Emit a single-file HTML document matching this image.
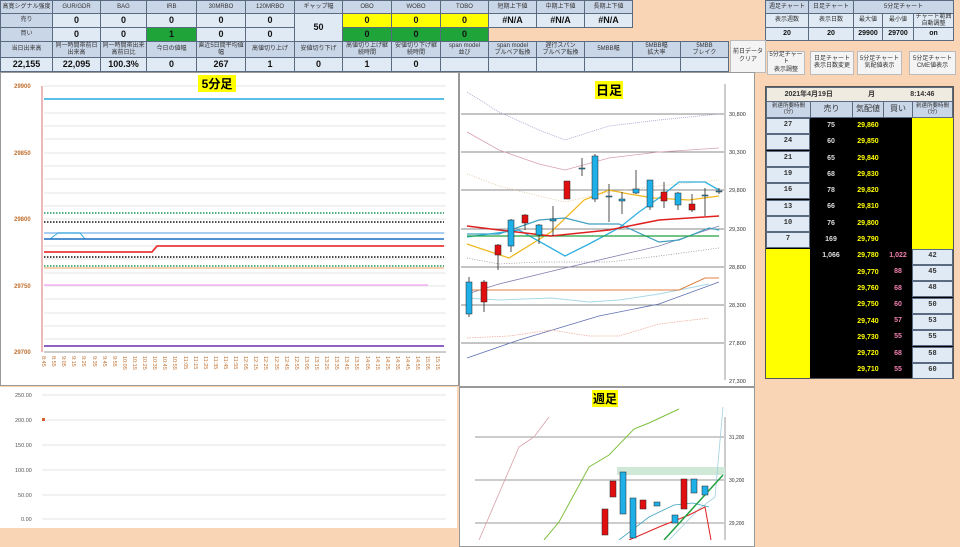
<!DOCTYPE html>
<html><head><meta charset="utf-8"><style>
*{margin:0;padding:0;box-sizing:border-box}
body{width:960px;height:540px;background:#fad5b5;position:relative;overflow:hidden;font-family:"Liberation Sans","Noto Sans CJK JP",sans-serif}
.c{position:absolute;border:1px solid #5a6a80;background:#dfeaf4;font-size:6px;color:#333;text-align:center;display:flex;align-items:center;justify-content:center;line-height:1.05}
.h{background:#c9d6e8}
.v{font-size:9px;font-weight:bold;color:#111}
.y{background:#ffff00}.g{background:#1fa43a}
.btn{position:absolute;background:#f4f4f4;border:1px solid #bbb;font-size:6px;text-align:center;display:flex;align-items:center;justify-content:center;line-height:1.2;color:#333}
.p{position:absolute;background:#fff;border:1px solid #999}
.t{position:absolute;font-size:8px;font-weight:bold;text-align:center}
</style></head><body>
<!-- top table -->
<div class="c h" style="left:0;top:0;width:53px;height:14px">高寛シグナル強度</div>
<div class="c h" style="left:52;left:52px;top:0;width:49px;height:14px">GUR/GDR</div>
<div class="c h" style="left:100px;top:0;width:47px;height:14px">BAG</div>
<div class="c h" style="left:146px;top:0;width:51px;height:14px">IRB</div>
<div class="c h" style="left:196px;top:0;width:50px;height:14px">30MRBO</div>
<div class="c h" style="left:245px;top:0;width:50px;height:14px">120MRBO</div>
<div class="c h" style="left:294px;top:0;width:49px;height:14px">ギャップ幅</div>
<div class="c h" style="left:342px;top:0;width:50px;height:14px">OBO</div>
<div class="c h" style="left:391px;top:0;width:50px;height:14px">WOBO</div>
<div class="c h" style="left:440px;top:0;width:49px;height:14px">TOBO</div>
<div class="c h" style="left:488px;top:0;width:49px;height:14px">短期上下値</div>
<div class="c h" style="left:536px;top:0;width:49px;height:14px">中期上下値</div>
<div class="c h" style="left:584px;top:0;width:49px;height:14px">長期上下値</div>

<div class="c h" style="left:0;top:13px;width:53px;height:15px">売り</div>
<div class="c v" style="left:52px;top:13px;width:49px;height:15px">0</div>
<div class="c v" style="left:100px;top:13px;width:47px;height:15px">0</div>
<div class="c v" style="left:146px;top:13px;width:51px;height:15px">0</div>
<div class="c v" style="left:196px;top:13px;width:50px;height:15px">0</div>
<div class="c v" style="left:245px;top:13px;width:50px;height:15px">0</div>
<div class="c v" style="left:294px;top:13px;width:49px;height:29px">50</div>
<div class="c v y" style="left:342px;top:13px;width:50px;height:15px">0</div>
<div class="c v y" style="left:391px;top:13px;width:50px;height:15px">0</div>
<div class="c v y" style="left:440px;top:13px;width:49px;height:15px">0</div>
<div class="c v" style="left:488px;top:13px;width:49px;height:15px">#N/A</div>
<div class="c v" style="left:536px;top:13px;width:49px;height:15px">#N/A</div>
<div class="c v" style="left:584px;top:13px;width:49px;height:15px">#N/A</div>

<div class="c h" style="left:0;top:27px;width:53px;height:15px">買い</div>
<div class="c v" style="left:52px;top:27px;width:49px;height:15px">0</div>
<div class="c v" style="left:100px;top:27px;width:47px;height:15px">0</div>
<div class="c v g" style="left:146px;top:27px;width:51px;height:15px">1</div>
<div class="c v" style="left:196px;top:27px;width:50px;height:15px">0</div>
<div class="c v" style="left:245px;top:27px;width:50px;height:15px">0</div>
<div class="c v g" style="left:342px;top:27px;width:50px;height:15px">0</div>
<div class="c v g" style="left:391px;top:27px;width:50px;height:15px">0</div>
<div class="c v g" style="left:440px;top:27px;width:49px;height:15px">0</div>

<div class="c h" style="left:0;top:41px;width:53px;height:17px">当日出来高</div>
<div class="c h" style="left:52px;top:41px;width:49px;height:17px">同一時間帯前日<br>出来高</div>
<div class="c h" style="left:100px;top:41px;width:47px;height:17px">同一時間帯出来<br>高前日比</div>
<div class="c h" style="left:146px;top:41px;width:51px;height:17px">今日の値幅</div>
<div class="c h" style="left:196px;top:41px;width:50px;height:17px">直近5日間平均値<br>幅</div>
<div class="c h" style="left:245px;top:41px;width:50px;height:17px">高値切り上げ</div>
<div class="c h" style="left:294px;top:41px;width:49px;height:17px">安値切り下げ</div>
<div class="c h" style="left:342px;top:41px;width:50px;height:17px">高値切り上げ継<br>続時間</div>
<div class="c h" style="left:391px;top:41px;width:50px;height:17px">安値切り下げ継<br>続時間</div>
<div class="c h" style="left:440px;top:41px;width:49px;height:17px">span model<br>並び</div>
<div class="c h" style="left:488px;top:41px;width:49px;height:17px">span model<br>ブルベア転換</div>
<div class="c h" style="left:536px;top:41px;width:49px;height:17px">遅行スパン<br>ブルベア転換</div>
<div class="c h" style="left:584px;top:41px;width:49px;height:17px">5MBB幅</div>
<div class="c h" style="left:632px;top:41px;width:49px;height:17px">5MBB幅<br>拡大率</div>
<div class="c h" style="left:680px;top:41px;width:49px;height:17px">5MBB<br>ブレイク</div>

<div class="c v" style="left:0;top:57px;width:53px;height:15px">22,155</div>
<div class="c v" style="left:52px;top:57px;width:49px;height:15px">22,095</div>
<div class="c v" style="left:100px;top:57px;width:47px;height:15px">100.3%</div>
<div class="c v" style="left:146px;top:57px;width:51px;height:15px">0</div>
<div class="c v" style="left:196px;top:57px;width:50px;height:15px">267</div>
<div class="c v" style="left:245px;top:57px;width:50px;height:15px">1</div>
<div class="c v" style="left:294px;top:57px;width:49px;height:15px">0</div>
<div class="c v" style="left:342px;top:57px;width:50px;height:15px">1</div>
<div class="c v" style="left:391px;top:57px;width:50px;height:15px">0</div>
<div class="c v" style="left:440px;top:57px;width:49px;height:15px"></div>
<div class="c v" style="left:488px;top:57px;width:49px;height:15px"></div>
<div class="c v" style="left:536px;top:57px;width:49px;height:15px"></div>
<div class="c v" style="left:584px;top:57px;width:49px;height:15px"></div>
<div class="c v" style="left:632px;top:57px;width:49px;height:15px"></div>
<div class="c v" style="left:680px;top:57px;width:49px;height:15px"></div>

<!-- right top table -->
<div class="c h" style="left:765px;top:0;width:44px;height:14px">週足チャート</div>
<div class="c h" style="left:808px;top:0;width:46px;height:14px">日足チャート</div>
<div class="c h" style="left:853px;top:0;width:101px;height:14px">5分足チャート</div>
<div class="c" style="left:765px;top:13px;width:44px;height:15px">表示週数</div>
<div class="c" style="left:808px;top:13px;width:46px;height:15px">表示日数</div>
<div class="c" style="left:853px;top:13px;width:30px;height:15px">最大値</div>
<div class="c" style="left:882px;top:13px;width:32px;height:15px">最小値</div>
<div class="c" style="left:913px;top:13px;width:41px;height:15px">チャート範囲<br>自動調整</div>
<div class="c v" style="left:765px;top:27px;width:44px;height:14px;font-size:7px">20</div>
<div class="c v" style="left:808px;top:27px;width:46px;height:14px;font-size:7px">20</div>
<div class="c v" style="left:853px;top:27px;width:30px;height:14px;font-size:7px">29900</div>
<div class="c v" style="left:882px;top:27px;width:32px;height:14px;font-size:7px">29700</div>
<div class="c v" style="left:913px;top:27px;width:41px;height:14px;font-size:7px">on</div>

<div class="btn" style="left:730px;top:40px;width:36px;height:33px">前日データ<br>クリア</div>
<div class="btn" style="left:767px;top:51px;width:38px;height:24px">5分足チャート<br>表示調整</div>
<div class="btn" style="left:810px;top:51px;width:44px;height:24px">日足チャート<br>表示日数変更</div>
<div class="btn" style="left:857px;top:51px;width:45px;height:24px">5分足チャート<br>気配値表示</div>
<div class="btn" style="left:909px;top:51px;width:47px;height:24px">5分足チャート<br>CME値表示</div>

<!-- 5min chart -->
<div class="p" style="left:0;top:72px;width:459px;height:314px"></div>
<svg style="position:absolute;left:0;top:72px" width="459" height="314">
<g stroke="#ddd" stroke-width="0.7">
<line x1="44" x2="446" y1="14" y2="14"/><line x1="44" x2="446" y1="41" y2="41"/><line x1="44" x2="446" y1="54" y2="54"/><line x1="44" x2="446" y1="67" y2="67"/><line x1="44" x2="446" y1="81" y2="81"/><line x1="44" x2="446" y1="94" y2="94"/><line x1="44" x2="446" y1="107" y2="107"/><line x1="44" x2="446" y1="121" y2="121"/><line x1="44" x2="446" y1="134" y2="134"/><line x1="44" x2="446" y1="147" y2="147"/><line x1="44" x2="446" y1="161" y2="161"/><line x1="44" x2="446" y1="174" y2="174"/><line x1="44" x2="446" y1="187" y2="187"/><line x1="44" x2="446" y1="201" y2="201"/><line x1="44" x2="446" y1="214" y2="214"/><line x1="44" x2="446" y1="227" y2="227"/><line x1="44" x2="446" y1="241" y2="241"/><line x1="44" x2="446" y1="254" y2="254"/><line x1="44" x2="446" y1="267" y2="267"/></g>
<line x1="42" y1="14" x2="42" y2="208" stroke="#e6a0a0" stroke-width="1.5"/>
<line x1="42" y1="208" x2="42" y2="280" stroke="#e6a0a0" stroke-width="1.5"/>
<line x1="44" y1="280" x2="446" y2="280" stroke="#999"/>
<line x1="44" y1="27" x2="444" y2="27" stroke="#5bc0e8" stroke-width="2"/>
<line x1="44" y1="141" x2="444" y2="141" stroke="#1a9a5a" stroke-width="1.5" stroke-dasharray="1.5 1.5"/>
<line x1="44" y1="150" x2="444" y2="150" stroke="#111" stroke-width="1.5" stroke-dasharray="1.5 1.5"/>
<line x1="44" y1="161" x2="444" y2="161" stroke="#9cc8f0" stroke-width="1.8"/>
<polyline points="50,167 58,161 80,161 85,167" fill="none" stroke="#3aaee0" stroke-width="1"/>
<line x1="44" y1="167" x2="444" y2="167" stroke="#1a6ec0" stroke-width="1.5"/>
<polyline points="44,180 152,180 157,174 444,174" fill="none" stroke="#e83a3a" stroke-width="1.8"/>
<line x1="44" y1="185" x2="444" y2="185" stroke="#111" stroke-width="1.5" stroke-dasharray="1.5 1.5"/>
<line x1="44" y1="194" x2="444" y2="194" stroke="#1a9a5a" stroke-width="1.5" stroke-dasharray="1.5 1.5"/>
<line x1="44" y1="196" x2="444" y2="196" stroke="#f0a060" stroke-width="1"/>
<line x1="44" y1="213" x2="428" y2="213" stroke="#f5b0f0" stroke-width="1.5"/>
<line x1="44" y1="274" x2="444" y2="274" stroke="#9060c0" stroke-width="2"/>
<g font-size="6" fill="#c07030" font-weight="bold" font-family="Liberation Sans">
<text x="14" y="16">29900</text><text x="14" y="83">29850</text><text x="14" y="149">29800</text><text x="14" y="216">29750</text><text x="14" y="282">29700</text></g>
<g font-size="5.5" fill="#c07030" font-family="Liberation Sans">
<text transform="translate(42,284) rotate(90)">8:45</text><text transform="translate(52,284) rotate(90)">8:55</text><text transform="translate(62,284) rotate(90)">9:05</text><text transform="translate(72,284) rotate(90)">9:15</text><text transform="translate(82,284) rotate(90)">9:25</text><text transform="translate(93,284) rotate(90)">9:35</text><text transform="translate(103,284) rotate(90)">9:45</text><text transform="translate(113,284) rotate(90)">9:55</text><text transform="translate(123,284) rotate(90)">10:05</text><text transform="translate(133,284) rotate(90)">10:15</text><text transform="translate(143,284) rotate(90)">10:25</text><text transform="translate(153,284) rotate(90)">10:35</text><text transform="translate(163,284) rotate(90)">10:45</text><text transform="translate(173,284) rotate(90)">10:55</text><text transform="translate(184,284) rotate(90)">11:05</text><text transform="translate(194,284) rotate(90)">11:15</text><text transform="translate(204,284) rotate(90)">11:25</text><text transform="translate(214,284) rotate(90)">11:35</text><text transform="translate(224,284) rotate(90)">11:45</text><text transform="translate(234,284) rotate(90)">11:55</text><text transform="translate(244,284) rotate(90)">12:05</text><text transform="translate(254,284) rotate(90)">12:15</text><text transform="translate(264,284) rotate(90)">12:25</text><text transform="translate(275,284) rotate(90)">12:35</text><text transform="translate(285,284) rotate(90)">12:45</text><text transform="translate(295,284) rotate(90)">12:55</text><text transform="translate(305,284) rotate(90)">13:05</text><text transform="translate(315,284) rotate(90)">13:15</text><text transform="translate(325,284) rotate(90)">13:25</text><text transform="translate(335,284) rotate(90)">13:35</text><text transform="translate(345,284) rotate(90)">13:45</text><text transform="translate(355,284) rotate(90)">13:55</text><text transform="translate(366,284) rotate(90)">14:05</text><text transform="translate(376,284) rotate(90)">14:15</text><text transform="translate(386,284) rotate(90)">14:25</text><text transform="translate(396,284) rotate(90)">14:35</text><text transform="translate(406,284) rotate(90)">14:45</text><text transform="translate(416,284) rotate(90)">14:55</text><text transform="translate(426,284) rotate(90)">15:05</text><text transform="translate(436,284) rotate(90)">15:15</text></g>
<rect x="198" y="3" width="38" height="17" fill="#ffff00"/>
<text x="217" y="16" font-size="12" font-weight="bold" text-anchor="middle" font-family="Liberation Sans,Noto Sans CJK JP,sans-serif">5分足</text>
</svg>

<!-- daily chart -->
<div class="p" style="left:459px;top:72px;width:296px;height:315px"></div>
<svg style="position:absolute;left:459px;top:72px" width="296" height="315">
<g stroke="#888" stroke-width="1"><line x1="2" x2="265" y1="42" y2="42"/><line x1="2" x2="265" y1="80" y2="80"/><line x1="2" x2="265" y1="118" y2="118"/><line x1="2" x2="265" y1="157" y2="157"/><line x1="2" x2="265" y1="195" y2="195"/><line x1="2" x2="265" y1="233" y2="233"/><line x1="2" x2="265" y1="271" y2="271"/></g>
<line x1="266" y1="12" x2="266" y2="308" stroke="#999"/>
<g font-size="5.5" fill="#333" font-family="Liberation Sans"><text x="270" y="44">30,800</text><text x="270" y="82">30,300</text><text x="270" y="120">29,800</text><text x="270" y="159">29,300</text><text x="270" y="197">28,800</text><text x="270" y="235">28,300</text><text x="270" y="273">27,800</text><text x="270" y="311">27,300</text></g>
<polyline points="8,20 40,40 80,58 106,68 150,54 200,48 260,42" fill="none" stroke="#a0a0d0" stroke-width="0.8" stroke-dasharray="1 1"/>
<polyline points="8,60 40,78 80,92 106,98 150,86 200,80 260,76" fill="none" stroke="#d8a0b8" stroke-width="0.8"/>
<polyline points="8,102 40,114 80,124 106,130 150,120 200,114 260,108" fill="none" stroke="#d8c090" stroke-width="0.7" stroke-dasharray="1 1.5"/>
<polyline points="8,186 40,192 80,190 150,190 200,184 260,176" fill="none" stroke="#888" stroke-width="0.7" stroke-dasharray="1 1.5"/>
<polyline points="8,222 40,212 106,196 200,174 260,154" fill="none" stroke="#8080b0" stroke-width="0.8"/>
<polyline points="8,286 60,268 140,244 200,232 260,210" fill="none" stroke="#6070b0" stroke-width="0.8"/>
<polyline points="8,266 50,264 92,258 130,264 160,264 200,252 250,246" fill="none" stroke="#f0b0a0" stroke-width="0.8" stroke-dasharray="1.5 1"/>
<polyline points="8,226 40,228 92,226 130,230 160,228 200,222 250,212" fill="none" stroke="#a8d8e8" stroke-width="1"/>
<polyline points="8,218 220,218 246,206 260,206" fill="none" stroke="#e08040" stroke-width="1"/>
<polyline points="8,172 50,186 92,160 125,128 150,118 170,122 195,126 230,128 260,124" fill="none" stroke="#f0b820" stroke-width="1.3"/>
<polyline points="8,162 40,162 80,148 106,146 130,152 160,152 200,170 220,168 250,156 260,158" fill="none" stroke="#40a0c0" stroke-width="1.2"/>
<polyline points="8,165 60,158 92,176 106,184 130,172 160,156 180,140 200,126 220,110 246,110 260,118" fill="none" stroke="#30b0e0" stroke-width="1.3"/>
<polyline points="8,164 220,164 260,164" fill="none" stroke="#20a040" stroke-width="1.2"/>
<polyline points="8,154 40,158 92,164 150,158 200,148 260,144" fill="none" stroke="#e02020" stroke-width="1.5"/>
<g stroke="#222" stroke-width="0.8"><line x1="10" y1="205" x2="10" y2="245"/><line x1="25" y1="208" x2="25" y2="240"/><line x1="39" y1="172" x2="39" y2="198"/><line x1="52" y1="147" x2="52" y2="180"/><line x1="66" y1="142" x2="66" y2="158"/><line x1="80" y1="152" x2="80" y2="172"/><line x1="94" y1="134" x2="94" y2="164"/><line x1="123" y1="86" x2="123" y2="104"/><line x1="136" y1="82" x2="136" y2="130"/><line x1="150" y1="112" x2="150" y2="150"/><line x1="163" y1="120" x2="163" y2="142"/><line x1="177" y1="98" x2="177" y2="122"/><line x1="191" y1="108" x2="191" y2="138"/><line x1="205" y1="110" x2="205" y2="136"/><line x1="219" y1="120" x2="219" y2="138"/><line x1="233" y1="122" x2="233" y2="140"/><line x1="246" y1="116" x2="246" y2="144"/><line x1="260" y1="116" x2="260" y2="122"/></g>
<g stroke="#222" stroke-width="0.5">
<rect x="7" y="210" width="6" height="32" fill="#20b0e8"/><rect x="22" y="210" width="6" height="20" fill="#e01010"/><rect x="36" y="173" width="6" height="10" fill="#e01010"/><rect x="49" y="148" width="6" height="26" fill="#20b0e8"/><rect x="63" y="143" width="6" height="8" fill="#e01010"/><rect x="77" y="153" width="6" height="10" fill="#20b0e8"/><rect x="91" y="147" width="6" height="2" fill="#20b0e8"/><rect x="105" y="109" width="6" height="18" fill="#e01010"/><rect x="120" y="96" width="6" height="1" fill="#20b0e8"/><rect x="133" y="84" width="6" height="43" fill="#20b0e8"/><rect x="147" y="124" width="6" height="1" fill="#20b0e8"/><rect x="160" y="127" width="6" height="2" fill="#20b0e8"/><rect x="174" y="117" width="6" height="4" fill="#20b0e8"/><rect x="188" y="108" width="6" height="27" fill="#20b0e8"/><rect x="202" y="120" width="6" height="9" fill="#e01010"/><rect x="216" y="121" width="6" height="12" fill="#20b0e8"/><rect x="230" y="132" width="6" height="6" fill="#e01010"/><rect x="243" y="123" width="6" height="1" fill="#20b0e8"/><rect x="257" y="119" width="6" height="1" fill="#20b0e8"/></g>
<rect x="136" y="9" width="28" height="18" fill="#ffff00"/>
<text x="150" y="23" font-size="13" font-weight="bold" text-anchor="middle" font-family="Noto Sans CJK JP,sans-serif">日足</text>
</svg>

<!-- bottom left -->
<div style="position:absolute;left:0;top:387px;width:457px;height:141px;background:#fff"></div>
<svg style="position:absolute;left:0;top:387px" width="457" height="141">
<g stroke="#ddd" stroke-width="0.8"><line x1="42" x2="446" y1="8" y2="8"/><line x1="42" x2="446" y1="33" y2="33"/><line x1="42" x2="446" y1="58" y2="58"/><line x1="42" x2="446" y1="83" y2="83"/><line x1="42" x2="446" y1="108" y2="108"/><line x1="42" x2="446" y1="132" y2="132"/></g>
<g font-size="5.5" fill="#555" font-family="Liberation Sans"><text x="15" y="10">250.00</text><text x="15" y="35">200.00</text><text x="15" y="60">150.00</text><text x="15" y="85">100.00</text><text x="18" y="110">50.00</text><text x="21" y="134">0.00</text></g>
<rect x="42" y="31" width="3" height="3" fill="#d06030"/>
</svg>

<!-- weekly chart -->
<div class="p" style="left:459px;top:387px;width:296px;height:160px"></div>
<svg style="position:absolute;left:459px;top:387px" width="296" height="153">
<g stroke="#999"><line x1="16" x2="265" y1="50" y2="50"/><line x1="16" x2="265" y1="93" y2="93"/><line x1="16" x2="265" y1="136" y2="136"/></g>
<line x1="266" y1="30" x2="266" y2="153" stroke="#999"/>
<g font-size="5" fill="#333" font-family="Liberation Sans"><text x="270" y="52">31,200</text><text x="270" y="95">30,200</text><text x="270" y="138">29,200</text></g>
<rect x="158" y="80" width="108" height="8" fill="#cfe8d8"/>
<polyline points="20,153 60,60 75,50 90,30" fill="none" stroke="#d8a0a8" stroke-width="0.8"/>
<polyline points="85,153 100,135 130,80 150,68 175,42 190,36 220,22" fill="none" stroke="#80c040" stroke-width="1"/>
<polyline points="210,153 240,122 256,110 264,20" fill="none" stroke="#a0d0e0" stroke-width="0.8"/>
<polyline points="160,153 190,130 215,118 234,116 250,120" fill="none" stroke="#40a0c0" stroke-width="0.8"/>
<polyline points="170,153 200,140 230,128 246,120 252,153" fill="none" stroke="#e02020" stroke-width="1"/>
<polyline points="205,153 264,88" fill="none" stroke="#20a040" stroke-width="1.5"/>
<g stroke="#222" stroke-width="0.5"><rect x="143" y="122" width="6" height="26" fill="#e01010"/><rect x="151" y="94" width="6" height="16" fill="#e01010"/><rect x="161" y="85" width="6" height="42" fill="#20b0e8"/><rect x="171" y="111" width="6" height="40" fill="#20b0e8"/><rect x="181" y="113" width="6" height="9" fill="#e01010"/><rect x="195" y="115" width="6" height="4" fill="#20b0e8"/><rect x="213" y="128" width="6" height="8" fill="#20b0e8"/><rect x="222" y="92" width="6" height="30" fill="#e01010"/><rect x="232" y="92" width="6" height="14" fill="#20b0e8"/><rect x="243" y="99" width="6" height="9" fill="#20b0e8"/></g>
<rect x="133" y="3" width="26" height="17" fill="#ffff00"/>
<text x="146" y="16" font-size="12" font-weight="bold" text-anchor="middle" font-family="Noto Sans CJK JP,sans-serif">週足</text>
</svg>

<!-- right board -->
<div style="position:absolute;left:765px;top:86px;width:189px;height:293px;background:#000;border:1px solid #555"></div>
<div class="c" style="left:766px;top:87px;width:187px;height:15px;background:#f0ebe0;font-size:7px;font-weight:bold;justify-content:space-around">2021年4月19日<span>月</span><span>8:14:46</span></div>
<div class="c h" style="left:766px;top:101px;width:45px;height:17px;font-size:5.5px">到達所要時間<br>(分)</div>
<div class="c h" style="left:810px;top:101px;width:43px;height:17px;font-size:8px">売り</div>
<div class="c h" style="left:852px;top:101px;width:32px;height:17px;font-size:8px">気配値</div>
<div class="c h" style="left:883px;top:101px;width:30px;height:17px;font-size:8px">買い</div>
<div class="c h" style="left:912px;top:101px;width:41px;height:17px;font-size:5.5px">到達所要時間<br>(分)</div>
<div id="rows"></div>
<script></script>
<div style="position:absolute;left:912px;top:118px;width:41px;height:131px;background:#ff0"></div>
<div style="position:absolute;left:766px;top:249px;width:44px;height:129px;background:#ff0"></div>
<div style="position:absolute;left:766px;top:118px;font-size:7px;font-weight:bold;font-family:'Liberation Mono',monospace">
<div class="c" style="left:0;top:0;width:44px;height:16px;font-size:7px">27</div>
<div class="c" style="left:0;top:16px;width:44px;height:16px;font-size:7px">24</div>
<div class="c" style="left:0;top:33px;width:44px;height:16px;font-size:7px">21</div>
<div class="c" style="left:0;top:49px;width:44px;height:16px;font-size:7px">19</div>
<div class="c" style="left:0;top:65px;width:44px;height:16px;font-size:7px">16</div>
<div class="c" style="left:0;top:82px;width:44px;height:16px;font-size:7px">13</div>
<div class="c" style="left:0;top:98px;width:44px;height:16px;font-size:7px">10</div>
<div class="c" style="left:0;top:114px;width:44px;height:16px;font-size:7px">7</div>
<div class="c" style="left:146px;top:131px;width:41px;height:16px;font-size:7px">42</div>
<div class="c" style="left:146px;top:147px;width:41px;height:16px;font-size:7px">45</div>
<div class="c" style="left:146px;top:163px;width:41px;height:16px;font-size:7px">48</div>
<div class="c" style="left:146px;top:180px;width:41px;height:16px;font-size:7px">50</div>
<div class="c" style="left:146px;top:196px;width:41px;height:16px;font-size:7px">53</div>
<div class="c" style="left:146px;top:212px;width:41px;height:16px;font-size:7px">55</div>
<div class="c" style="left:146px;top:229px;width:41px;height:16px;font-size:7px">58</div>
<div class="c" style="left:146px;top:245px;width:41px;height:16px;font-size:7px">60</div>
</div>
<div style="position:absolute;left:810px;top:118px;width:103px;font-size:7px;font-weight:bold;line-height:16.3px;font-family:'Liberation Sans',sans-serif">
<div style="position:absolute;left:0;width:42px;text-align:center;color:#ddd">75<br>60<br>65<br>68<br>78<br>66<br>76<br>169<br>1,066</div>
<div style="position:absolute;left:42px;width:32px;text-align:center;color:#ff0">29,860<br>29,850<br>29,840<br>29,830<br>29,820<br>29,810<br>29,800<br>29,790<br>29,780<br>29,770<br>29,760<br>29,750<br>29,740<br>29,730<br>29,720<br>29,710</div>
<div style="position:absolute;left:73px;width:30px;text-align:center;color:#f080b0;top:130px">1,022<br>88<br>68<br>60<br>57<br>55<br>68<br>55</div>
</div>
</body></html>
